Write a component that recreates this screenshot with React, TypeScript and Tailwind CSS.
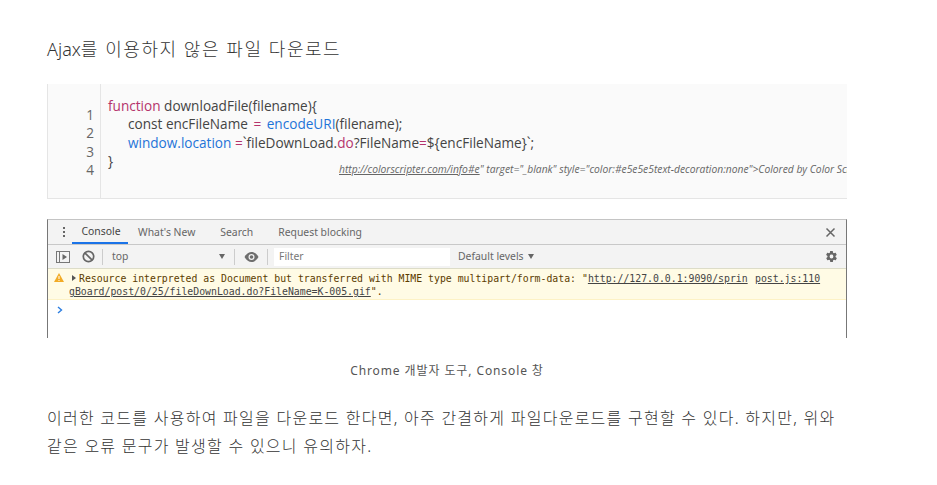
const sans = "font-['Noto_Sans','Noto_Sans_CJK_KR',sans-serif]";
const mono = "font-['DejaVu_Sans_Mono','Liberation_Mono',monospace]";

function SidebarIcon() {
  return (
    <svg width="14" height="12" viewBox="0 0 14 12" fill="none" className="ml-[8px] shrink-0">
      <rect x="0.5" y="0.5" width="13" height="11" stroke="#777" />
      <path d="M3.5 1 V11" stroke="#777" />
      <path d="M6.5 3 L11 6 L6.5 9 Z" fill="#666" />
    </svg>
  );
}

function BanIcon() {
  return (
    <svg width="13" height="13" viewBox="0 0 13 13" fill="none" className="ml-[12px] shrink-0">
      <circle cx="6.5" cy="6.5" r="5.2" stroke="#666" strokeWidth="1.7" />
      <path d="M2.8 2.8 L10.2 10.2" stroke="#666" strokeWidth="1.7" />
    </svg>
  );
}

function EyeIcon() {
  return (
    <svg width="15" height="10" viewBox="0 0 15 10" className="ml-[9px] shrink-0">
      <path d="M0.5 5 C2.5 1.5 5 0 7.5 0 C10 0 12.5 1.5 14.5 5 C12.5 8.5 10 10 7.5 10 C5 10 2.5 8.5 0.5 5 Z" fill="#6e6e6e" />
      <circle cx="7.5" cy="5" r="3" fill="#f3f3f3" />
      <circle cx="7.5" cy="5" r="1.8" fill="#6e6e6e" />
    </svg>
  );
}

function GearIcon() {
  return (
    <svg width="13" height="13" viewBox="0 0 24 24" className="ml-auto mr-[8px] shrink-0">
      <path
        fillRule="evenodd"
        fill="#666"
        d="M19.4 13c.1-.3.1-.7.1-1s0-.7-.1-1l2.1-1.6c.2-.2.2-.4.1-.6l-2-3.5c-.1-.2-.4-.3-.6-.2l-2.5 1c-.5-.4-1.1-.7-1.7-1l-.4-2.6c0-.3-.2-.5-.5-.5h-4c-.3 0-.5.2-.5.4l-.4 2.7c-.6.2-1.1.6-1.7 1l-2.5-1c-.2-.1-.5 0-.6.2l-2 3.5c-.1.2-.1.5.1.6L4.6 11c0 .3-.1.7-.1 1s0 .7.1 1l-2.1 1.6c-.2.2-.2.4-.1.6l2 3.5c.1.2.4.3.6.2l2.5-1c.5.4 1.1.7 1.7 1l.4 2.6c0 .3.2.5.5.5h4c.3 0 .5-.2.5-.4l.4-2.7c.6-.2 1.1-.6 1.7-1l2.5 1c.2.1.5 0 .6-.2l2-3.5c.1-.2.1-.5-.1-.6L19.4 13zM12 15.5a3.5 3.5 0 1 1 0-7 3.5 3.5 0 0 1 0 7z"
      />
    </svg>
  );
}

function CodeBlock() {
  return (
    <div className="flex h-[115px] w-[800px] overflow-hidden border-b border-l border-[#e5e5e5] bg-[#fafafa] text-[13.6px] leading-[18.3px] text-[#444] font-['Open_Sans','Noto_Sans',sans-serif]">
      <div className="flex w-[53px] shrink-0 flex-col items-end border-r border-[#e5e5e5] pt-[22px] pr-[6px] text-[#666]">
        <div>1</div>
        <div>2</div>
        <div>3</div>
        <div>4</div>
      </div>
      <div className="relative flex-1 whitespace-pre pt-[13px] pl-[7px]">
        <div>
          <span className="text-[#b5346c]">function</span> downloadFile(filename){"{"}
        </div>
        <div className="pl-[20px]">
          const encFileName <span className="mx-[2px] text-[#b5346c]">=</span>{" "}
          <span className="text-[#1f74d8]">encodeURI</span>(filename);
        </div>
        <div className="pl-[20px]">
          <span className="text-[#1f74d8]">window.location</span> <span className="text-[#b5346c]">=</span>`fileDownLoad.<span className="text-[#b5346c]">do</span>?FileName<span className="text-[#b5346c]">=</span>${"{"}encFileName{"}"}`;
        </div>
        <div>{"}"}</div>
        <div className="absolute left-[238px] top-[79px] text-[10.3px] italic leading-[13px] text-[#666]">
          <span className="underline">http://colorscripter.com/info#e</span>" target="_blank" style="color:#e5e5e5text-decoration:none"&gt;Colored by Color Scripter
        </div>
      </div>
    </div>
  );
}

function DevTools() {
  return (
    <div className={`flex h-[119px] w-[800px] flex-col border-x border-t border-x-[#777] border-t-[#c4c4c4] bg-white ${sans} text-[10.4px] text-[#666]`}>
      <div className="flex h-[25px] shrink-0 items-center border-b border-[#c8c8c8] bg-[#f3f3f3]">
        <div className="ml-[15px] flex flex-col gap-[2px]">
          <span className="h-[2px] w-[2px] bg-[#666]" />
          <span className="h-[2px] w-[2px] bg-[#666]" />
          <span className="h-[2px] w-[2px] bg-[#666]" />
        </div>
        <div className="ml-[7px] flex h-full w-[56px] items-center justify-center border-b-2 border-[#1a73e8] pt-[2px] pl-[2px] text-[#444]">Console</div>
        <div className="ml-[8px] pt-[2px] pl-[2px]">What's New</div>
        <div className="ml-[25px] pt-[2px]">Search</div>
        <div className="ml-[25px] pt-[2px]">Request blocking</div>
        <svg width="11" height="11" viewBox="0 0 11 11" fill="none" stroke="#666" strokeWidth="1.5" className="ml-auto mr-[10px]">
          <path d="M1.5 1.5 L9.5 9.5 M9.5 1.5 L1.5 9.5" />
        </svg>
      </div>
      <div className="flex h-[24px] shrink-0 items-center border-b border-[#dcdcc8] bg-[#f3f3f3]">
        <SidebarIcon />
        <BanIcon />
        <div className="ml-[7px] h-[16px] w-px bg-[#ccc]" />
        <div className="ml-[9px] w-[107px]">top</div>
        <div className="h-0 w-0 border-x-[3.5px] border-t-[5px] border-x-transparent border-t-[#666]" />
        <div className="ml-[9px] h-[16px] w-px bg-[#ccc]" />
        <EyeIcon />
        <div className="ml-[8px] h-[16px] w-px bg-[#ccc]" />
        <div className="ml-[6px] flex h-[18px] w-[176px] items-center bg-white pl-[5px] text-[#777]">Filter</div>
        <div className="ml-[8px]">Default levels</div>
        <div className="ml-[4px] h-0 w-0 border-x-[3.5px] border-t-[5px] border-x-transparent border-t-[#666]" />
        <GearIcon />
      </div>
      <div className={`relative h-[31px] shrink-0 border-b border-[#fdf2c5] bg-[#fffbe5] pl-[21px] pt-[3px] ${mono} text-[9.83px] leading-[13px] whitespace-pre text-[#5c3c00]`}>
        <svg className="absolute left-[6px] top-[4px]" width="10" height="9" viewBox="0 0 10 9">
          <path d="M5 0 L10 9 L0 9 Z" fill="#f2ab26" />
          <rect x="4.5" y="3" width="1" height="3" fill="#fff" />
          <rect x="4.5" y="7" width="1" height="1" fill="#fff" />
        </svg>
        <div>
          <span className="mr-[1px] ml-[3px] inline-block h-0 w-0 border-y-[3px] border-l-[4px] border-y-transparent border-l-[#555] align-[1px]" /><span className="ml-[2px]">Resource interpreted as Document but transferred with MIME type multipart/form-data: "</span><span className="text-[#444] underline">http://127.0.0.1:9090/sprin</span>
        </div>
        <div><span className="text-[#444] underline">gBoard/post/0/25/fileDownLoad.do?FileName=K-005.gif</span>".</div>
        <div className="absolute left-[707px] top-[3px] text-[#444] underline">post.js:110</div>
      </div>
      <div className="pl-[9px] pt-[6px] leading-[12px]">
        <svg width="6" height="8" viewBox="0 0 6 8" fill="none" stroke="#2a7de1" strokeWidth="1.4">
          <path d="M1 1 L4.5 4 L1 7" />
        </svg>
      </div>
    </div>
  );
}

export default function App() {
  return (
    <div className={`min-h-[485px] w-[937px] overflow-hidden bg-white pl-[47px] ${sans} text-[#333]`}>
      <h2 className="pt-[36px] text-[18px] font-light leading-[26px] text-[#333]">
        Ajax<span className="tracking-[1.55px]">를 이용하지 않은 파일 다운로드</span>
      </h2>
      <div className="mt-[22px]">
        <CodeBlock />
      </div>
      <div className="mt-[20px]">
        <DevTools />
      </div>
      <p className="mt-[23px] w-[800px] text-center text-[12px] leading-[20px] tracking-[0.9px] text-[#555]">Chrome 개발자 도구, Console 창</p>
      <p className="mt-[23px] w-[800px] break-keep text-[16px] font-light leading-[28px] tracking-[1.26px] text-[#333]">
        이러한 코드를 사용하여 파일을 다운로드 한다면, 아주 간결하게 파일다운로드를 구현할 수 있다. 하지만, 위와 같은 오류 문구가 발생할 수 있으니 유의하자.
      </p>
    </div>
  );
}
